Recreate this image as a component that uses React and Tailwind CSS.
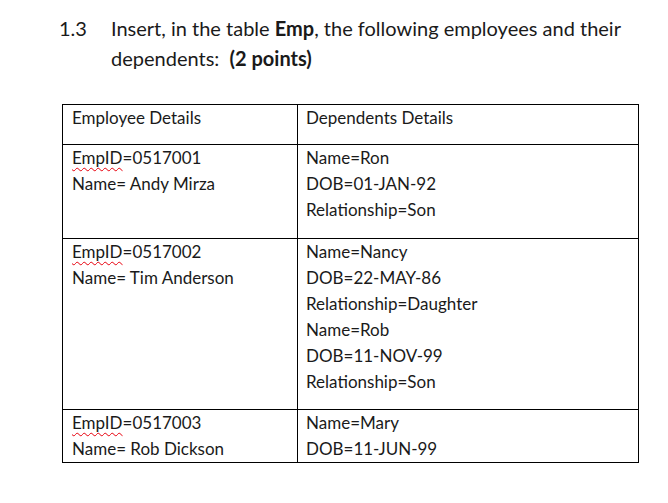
import React from 'react';

const rows = [
    {
        emp: ['0517001', 'Andy Mirza'],
        deps: ['Name=Ron', 'DOB=01-JAN-92', 'Relationship=Son'],
        pb: 'pb-[15px]',
    },
    {
        emp: ['0517002', 'Tim Anderson'],
        deps: ['Name=Nancy', 'DOB=22-MAY-86', 'Relationship=Daughter', 'Name=Rob', 'DOB=11-NOV-99', 'Relationship=Son'],
        pb: 'pb-[14px]',
    },
    {
        emp: ['0517003', 'Rob Dickson'],
        deps: ['Name=Mary', 'DOB=11-JUN-99'],
        pb: '',
        last: true,
    },
];

function Cell({ children, left, pb }) {
    return (
        <div className={`${left ? 'border-r border-black pl-[9px]' : 'pl-[8px]'} ${pb}`}>
            {children}
        </div>
    );
}

export default function App() {
    return (
        <div className="w-[668px] h-[503px] bg-white text-[#1a1a1a]" style={{ fontFamily: 'Lato, "Open Sans", sans-serif' }}>
            <div className="flex pl-[59px] pt-[13px] text-[20px] leading-[30px]">
                <span className="w-[52px]">1.3</span>
                <p>
                    Insert, in the table <b>Emp</b>, the following employees and their<br />
                    dependents:&nbsp; <b>(2 points)</b>
                </p>
            </div>

            <div className="ml-[62px] mt-[31px] w-[577px] border border-black text-[17px] leading-[26px]">
                <div className="grid grid-cols-[235px_1fr] border-b border-black">
                    <Cell left pb="pb-[13px]">Employee Details</Cell>
                    <Cell pb="pb-[13px]">Dependents Details</Cell>
                </div>
                {rows.map((r, i) => (
                    <div key={i} className={`grid grid-cols-[235px_1fr] ${r.last ? '' : 'border-b border-black'}`}>
                        <Cell left pb={r.pb}>
                            <div>
                                <span className="underline decoration-wavy decoration-red-600 decoration-1 underline-offset-[3px]">EmpID</span>={r.emp[0]}
                            </div>
                            <div>Name= {r.emp[1]}</div>
                        </Cell>
                        <Cell pb={r.pb}>
                            {r.deps.map((d, j) => <div key={j}>{d}</div>)}
                        </Cell>
                    </div>
                ))}
            </div>
        </div>
    );
}
